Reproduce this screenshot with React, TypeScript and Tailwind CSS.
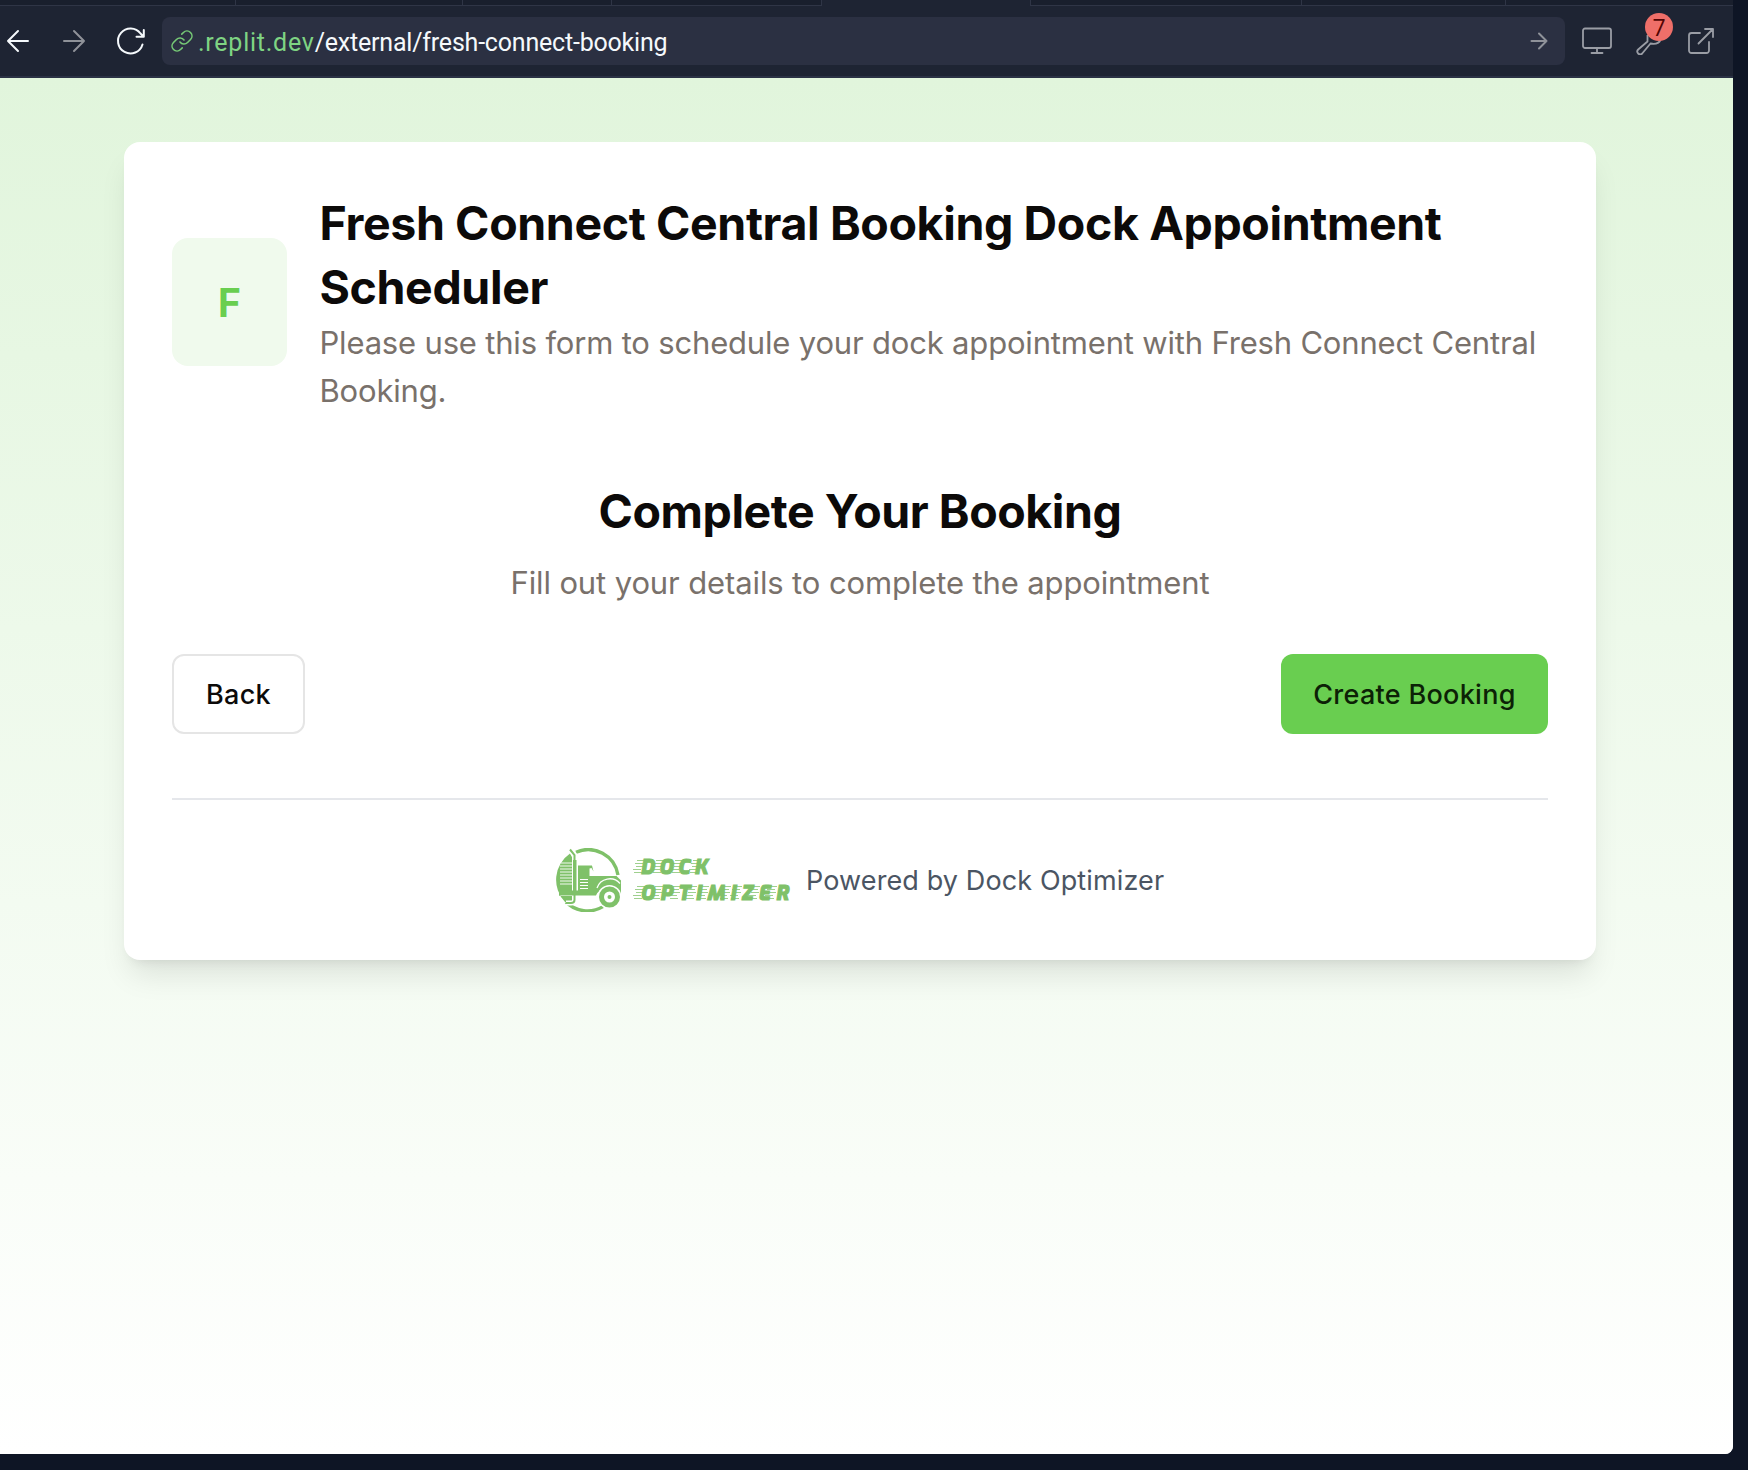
import React from "react";

const tabs = [
  "w-[236px] border-b border-r bg-[#191f2d]",
  "w-[227px] border-b border-r bg-[#191f2d]",
  "w-[149px] border-b border-r bg-[#191f2d]",
  "w-[210px] border-b border-r bg-[#191f2d]",
  "w-[208px] bg-[#1e2433]",
  "w-[272px] border-b border-l border-r bg-[#191f2d]",
  "w-[204px] border-b border-r bg-[#191f2d]",
  "flex-1 border-b bg-[#191f2d]",
];

function BackArrow() {
  return (
    <svg className="block" width="24" height="24" viewBox="0 0 24 24" fill="none" stroke="#f5f9fc" strokeWidth="2" strokeLinecap="round" strokeLinejoin="round">
      <path d="M22 12H2M12 2L2 12l10 10" />
    </svg>
  );
}

function ForwardArrow({ size, color }: { size: number; color: string }) {
  return (
    <svg className="block" width={size} height={size} viewBox="0 0 24 24" fill="none" stroke={color} strokeWidth={48 / size} strokeLinecap="round" strokeLinejoin="round">
      <path d="M2 12h20M12 2l10 10-10 10" />
    </svg>
  );
}

// Thin stripes trailing to the left of each letter of the wordmark.
function Speed({ x, y, w }: { x: number; y: number; w: number }) {
  return (
    <path
      d={`M${x + 3} ${y}h${w}M${x + 1} ${y + 3}h${w}M${x + 2} ${y + 6}h${w}M${x - 1} ${y + 9}h${w}M${x} ${y + 12}h${w}`}
      stroke="#7fc169"
      strokeWidth="1"
      opacity="0.75"
    />
  );
}

function Logo() {
  const g = "#7fc169";
  return (
    <svg className="block" width="236" height="64" viewBox="0 0 236 64">
      <g fill="none" stroke={g} strokeWidth="3.4">
        <path d="M20 4.200A30.300 30.300 0 0 1 62 27" />
        <path d="M10 54A30.300 30.300 0 0 0 47 58.600" />
      </g>
      <path d="M14 5.500A32 32 0 0 0 9 54L18 55V48H3L5 46H17V11Z" fill={g} />
      <path d="M5 15h11M4 18h12M4 21h12M4 24h12M4 27h12M4 30h12M4 33h12M4 36h12" stroke="#fff" strokeWidth="0.9" />
      <path d="M14 1.500L18.500 7V52Q18.500 55 15 55H10" fill="none" stroke="#fff" strokeWidth="5" />
      <path d="M14 1.500L18.500 7V52Q18.500 55 15 55H10" fill="none" stroke={g} strokeWidth="2" />
      <path d="M17 12h3.500v35H17z" fill={g} />
      <path d="M22 17.500h14l1.500 6-2-3.500-2 .5v7.500h27l4.500 4.500v15h-4a11.500 11.500 0 0 0-21 0H3v-5h19z" fill={g} />
      <path d="M24 31.500h8M24 34.500h8M24 37.500h8M24 40.500h8" stroke="#fff" strokeWidth="1" />
      <path d="M41 40a13.500 13.500 0 0 1 23-4.500" fill="none" stroke="#fff" strokeWidth="1.300" />
      <circle cx="53.500" cy="49" r="12" fill="#fff" />
      <circle cx="53.500" cy="49" r="8" fill="none" stroke={g} strokeWidth="5" />
      <circle cx="53.500" cy="49" r="2" fill={g} />
      <Speed x={78} y={12.500} w={8} />
      <Speed x={97} y={12.500} w={8} />
      <Speed x={116} y={12.500} w={8} />
      <Speed x={134} y={12.500} w={8} />
      <Speed x={78} y={38.500} w={8} />
      <Speed x={96} y={38.500} w={8} />
      <Speed x={114} y={38.500} w={8} />
      <Speed x={130} y={38.500} w={8} />
      <Speed x={142} y={38.500} w={8} />
      <Speed x={164} y={38.500} w={8} />
      <Speed x={175} y={38.500} w={8} />
      <Speed x={193} y={38.500} w={8} />
      <Speed x={210} y={38.500} w={8} />
      <g fill={g} stroke={g} strokeWidth="1.1" fontFamily="Exo, 'Open Sans', sans-serif" fontWeight="800" fontStyle="italic" fontSize="20">
        <text x="84.500" y="26" textLength="67">DOCK</text>
        <text x="84.500" y="52" textLength="148">OPTIMIZER</text>
      </g>
    </svg>
  );
}

export default function App() {
  return (
    <div className="flex h-[1470px] w-[1748px] overflow-hidden bg-[#0e1525] font-['Inter',sans-serif]">
      <div className="flex h-[1454px] w-[1733px] flex-col overflow-hidden rounded-br-lg bg-white">
        <div className="flex h-1.5 shrink-0 bg-[#1e2433]">
          {tabs.map((t) => (
            <div key={t} className={`${t} border-[#2f3546]`} />
          ))}
        </div>
        <div className="flex h-[72px] shrink-0 items-start border-b-2 border-[#2b3245] bg-[#1e2433] pt-[11px]">
          <div className="flex h-12 w-[162px] shrink-0 items-center pl-[6px]">
            <BackArrow />
            <div className="ml-8"><ForwardArrow size={24} color="#8f9299" /></div>
            <svg className="ml-[29px] block" width="32" height="32" viewBox="0 0 32 32" fill="none" stroke="#f5f9fc" strokeWidth="2" strokeLinecap="round" strokeLinejoin="round">
              <path d="M27.500 19.500A12.500 12.500 0 1 1 25.500 8.500L28.500 11.500M28.800 5V11.800H21.500" />
            </svg>
          </div>
          <div className="flex h-12 w-[1403px] shrink-0 items-center rounded-lg bg-[#2b3042] pl-2 pr-[17px]">
            <svg className="block" width="24" height="24" viewBox="0 0 24 24" fill="none" stroke="#76c976" strokeWidth="1.600" strokeLinecap="round">
              <path d="M10 13a5 5 0 0 0 7.540.540l3-3a5 5 0 0 0-7.070-7.070l-1.720 1.710" />
              <path d="M14 11a5 5 0 0 0-7.540-.540l-3 3a5 5 0 0 0 7.070 7.070l1.710-1.710" />
            </svg>
            <div className="ml-1 flex-1 whitespace-nowrap pt-[3px] font-['Roboto',sans-serif] text-[25px] tracking-[-0.2px] text-[#f5f9fc]">
              <span className="tracking-[0.75px] text-[#7fd483]">.replit.dev</span>/external/fresh-connect-booking
            </div>
            <ForwardArrow size={18} color="#8f9299" />
          </div>
          <div className="flex h-12 items-center pl-[17px]">
            <svg className="block" width="30" height="28" viewBox="0 0 30 28" fill="none" stroke="#9a9da5" strokeWidth="1.800" strokeLinecap="round" strokeLinejoin="round">
              <rect x="1" y="1.500" width="28" height="19.500" rx="2" />
              <path d="M15 21v5M9.500 26h11" />
            </svg>
            <div className="relative ml-6">
              <svg className="block" width="28" height="28" viewBox="0 0 28 28" fill="none" stroke="#9a9da5" strokeWidth="1.800" strokeLinejoin="round">
                <path d="M11.500 8V14.500L2.200 22.500a2.800 2.800 0 0 0 4 4L14.500 16.500Q22 18 24.500 13" />
              </svg>
              <div className="absolute -top-[14px] left-[9px] flex size-7 items-center justify-center rounded-full bg-[#ef6f69] font-['Open_Sans',sans-serif] text-[23px] font-medium text-[#520504]">7</div>
            </div>
            <svg className="ml-[23px] block" width="28" height="28" viewBox="0 0 28 28" fill="none" stroke="#9a9da5" strokeWidth="1.800" strokeLinecap="round" strokeLinejoin="round">
              <path d="M13 6H4.500A2.500 2.500 0 0 0 2 8.500v15A2.500 2.500 0 0 0 4.500 26h15a2.500 2.500 0 0 0 2.500-2.500V15M18 2h8v8M26 2L11.500 16.500" />
            </svg>
          </div>
        </div>

        <main className="flex-1 bg-linear-to-b/srgb from-[#e1f5dc] to-white pl-[124px] pt-16">
          <section className="w-[1472px] rounded-2xl bg-white p-12 shadow-[0_20px_30px_-6px_rgba(0,0,0,0.1),0_8px_12px_-8px_rgba(0,0,0,0.1)]">
            <header className="flex items-center">
              <div className="flex h-32 w-[115px] shrink-0 items-center justify-center rounded-2xl bg-[#f0faed] pt-0.5 text-[39px] font-bold text-[#69ce50]">F</div>
              <div className="-mb-px ml-[32.5px] whitespace-nowrap pt-px">
                <h1 className="text-[46.5px] font-bold leading-[64px] tracking-[-0.38px] text-[#0c0a09]">
                  Fresh Connect Central Booking Dock Appointment
                  <br />
                  Scheduler
                </h1>
                <p className="text-[31px] leading-[48px] tracking-[-0.18px] text-[#79716b]">
                  Please use this form to schedule your dock appointment with Fresh Connect Central
                  <br />
                  Booking.
                </p>
              </div>
            </header>
            <div className="-mb-px mt-16 pt-px text-center">
              <h2 className="text-[46.5px] font-bold leading-[64px] tracking-[-0.45px] text-[#0c0a09]">Complete Your Booking</h2>
              <p className="mt-4 text-[31px] leading-[48px] tracking-[-0.12px] text-[#79716b]">Fill out your details to complete the appointment</p>
            </div>
            <div className="mt-12 flex justify-between">
              <button className="h-20 w-[133px] rounded-xl border-2 border-[#e5e5e5] bg-white pt-0.5 text-[27px] font-medium tracking-[0.3px] text-[#0c0a09]">Back</button>
              <button className="h-20 w-[267px] rounded-xl bg-[#69ce50] pt-0.5 text-[27px] font-medium tracking-[0.3px] text-[#0c2106]">Create Booking</button>
            </div>
            <footer className="mt-16 flex h-[114px] items-end border-t-2 border-[#e5e7eb] pl-96">
              <Logo />
              <div className="ml-[14px] h-16 whitespace-nowrap text-[27px] leading-[66px] tracking-[0.12px] text-[#4b5563]">Powered by Dock Optimizer</div>
            </footer>
          </section>
        </main>
      </div>
    </div>
  );
}
